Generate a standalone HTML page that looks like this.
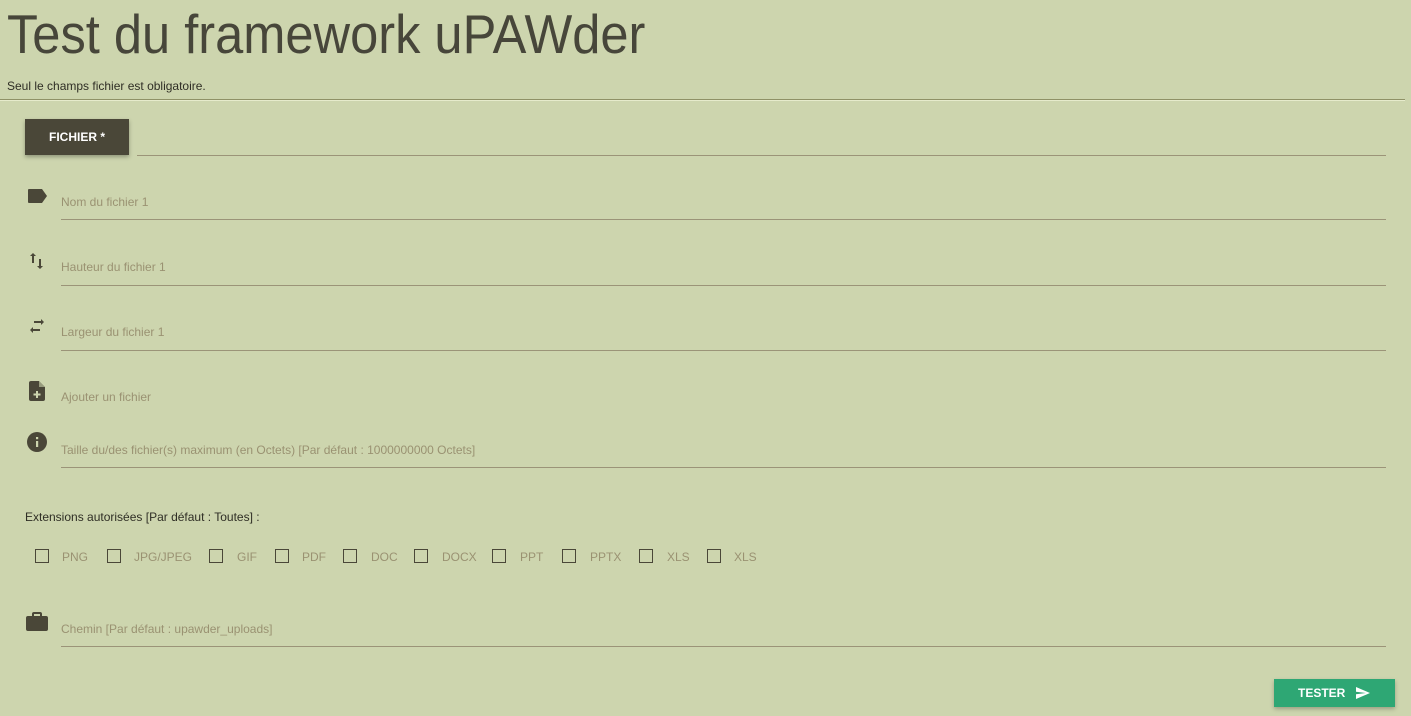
<!DOCTYPE html>
<html><head><meta charset="utf-8"><style>
html,body{margin:0;padding:0;width:1411px;height:716px;overflow:hidden;background:#cdd5ae;font-family:"Liberation Sans",sans-serif;color:#47463a}
.a{position:absolute}
.ph{position:absolute;font-size:12px;color:#9a9272;white-space:nowrap}
.ln{position:absolute;height:1px;background:#9b9478}
.cb{position:absolute;width:12px;height:12px;border:1.5px solid #4a4738;top:549px}
.cl{position:absolute;top:550px;font-size:12px;color:#9a9272}
</style></head><body>
<div class="a" style="left:7px;top:2px;font-size:55px;white-space:nowrap;transform-origin:0 0;transform:scaleX(0.92)">Test du framework uPAWder</div>
<div class="a" style="left:7px;top:79px;font-size:12px;color:#2f2e25">Seul le champs fichier est obligatoire.</div>
<div class="a" style="left:0;top:99px;width:1405px;height:1px;background:#8f9166;box-shadow:0 1px 0 #e6ebcc"></div>
<div class="a" style="left:25px;top:119px;width:104px;height:36px;background:#4a4738;box-shadow:0 2px 4px rgba(0,0,0,.3);color:#fff;font-weight:bold;font-size:12px;text-align:center;line-height:36px">FICHIER *</div>
<div class="ln" style="left:137px;top:155px;width:1249px"></div>

<svg class="a" style="left:27px;top:188px" width="21" height="16" viewBox="0 0 21 16"><path d="M2 1h13l5 7-5 7H2a1 1 0 0 1-1-1V2a1 1 0 0 1 1-1z" fill="#4a4738"/></svg>
<div class="ph" style="left:61px;top:195px">Nom du fichier 1</div>
<div class="ln" style="left:61px;top:219px;width:1325px"></div>

<svg class="a" style="left:29px;top:252px" width="16" height="18" viewBox="0 0 16 18"><path d="M4 1l-3 3h2v7h2V4h2zM11 17l3-3h-2V7h-2v7H8z" fill="#4a4738"/></svg>
<div class="ph" style="left:61px;top:260px">Hauteur du fichier 1</div>
<div class="ln" style="left:61px;top:285px;width:1325px"></div>

<svg class="a" style="left:27px;top:318px" width="20" height="16" viewBox="0 0 20 16"><path d="M14 1v2H7v2h7v2l3-3zM6 15v-2h7v-2H6V9l-3 3z" fill="#4a4738"/></svg>
<div class="ph" style="left:61px;top:325px">Largeur du fichier 1</div>
<div class="ln" style="left:61px;top:350px;width:1325px"></div>

<svg class="a" style="left:29px;top:381px" width="16" height="20" viewBox="0 0 16 20"><path d="M2 0h8l6 6v12a2 2 0 0 1-2 2H2a2 2 0 0 1-2-2V2a2 2 0 0 1 2-2z" fill="#4a4738"/><path d="M10 0v6h6z" fill="#cdd5ae" opacity=".6"/><path d="M7 10h2v2.5h2.5v2H9V17H7v-2.5H4.5v-2H7z" fill="#cdd5ae"/></svg>
<div class="ph" style="left:61px;top:390px">Ajouter un fichier</div>

<svg class="a" style="left:27px;top:432px" width="20" height="20" viewBox="0 0 20 20"><circle cx="10" cy="10" r="10" fill="#4a4738"/><rect x="9" y="9" width="2.2" height="6" fill="#cdd5ae"/><rect x="9" y="5" width="2.2" height="2.2" fill="#cdd5ae"/></svg>
<div class="ph" style="left:61px;top:443px">Taille du/des fichier(s) maximum (en Octets) [Par défaut : 1000000000 Octets]</div>
<div class="ln" style="left:61px;top:467px;width:1325px"></div>

<div class="a" style="left:25px;top:510px;font-size:12px;color:#2f2e25">Extensions autorisées [Par défaut : Toutes] :</div>
<div class="cb" style="left:35px"></div><div class="cl" style="left:62px">PNG</div>
<div class="cb" style="left:107px"></div><div class="cl" style="left:134px">JPG/JPEG</div>
<div class="cb" style="left:209px"></div><div class="cl" style="left:237px">GIF</div>
<div class="cb" style="left:275px"></div><div class="cl" style="left:302px">PDF</div>
<div class="cb" style="left:343px"></div><div class="cl" style="left:371px">DOC</div>
<div class="cb" style="left:414px"></div><div class="cl" style="left:442px">DOCX</div>
<div class="cb" style="left:492px"></div><div class="cl" style="left:520px">PPT</div>
<div class="cb" style="left:562px"></div><div class="cl" style="left:590px">PPTX</div>
<div class="cb" style="left:639px"></div><div class="cl" style="left:667px">XLS</div>
<div class="cb" style="left:707px"></div><div class="cl" style="left:734px">XLS</div>

<svg class="a" style="left:26px;top:612px" width="22" height="19" viewBox="0 0 22 19"><path d="M8 0h6a2 2 0 0 1 2 2v2h4a2 2 0 0 1 2 2v11a2 2 0 0 1-2 2H2a2 2 0 0 1-2-2V6a2 2 0 0 1 2-2h4V2a2 2 0 0 1 2-2zm0 2v2h6V2z" fill="#4a4738"/></svg>
<div class="ph" style="left:61px;top:622px">Chemin [Par défaut : upawder_uploads]</div>
<div class="ln" style="left:61px;top:646px;width:1325px"></div>

<div class="a" style="left:1274px;top:679px;width:121px;height:28px;background:#2ea774;box-shadow:0 2px 4px rgba(0,0,0,.25);color:#fff;font-weight:bold;font-size:12px;line-height:28px">
<span style="position:absolute;left:24px">TESTER</span>
<svg style="position:absolute;left:82px;top:8px" width="14" height="12" viewBox="0 0 14 12"><path d="M0 0l14 6-14 6 0-4.7 10-1.3-10-1.3z" fill="#fff"/></svg>
</div>
</body></html>
